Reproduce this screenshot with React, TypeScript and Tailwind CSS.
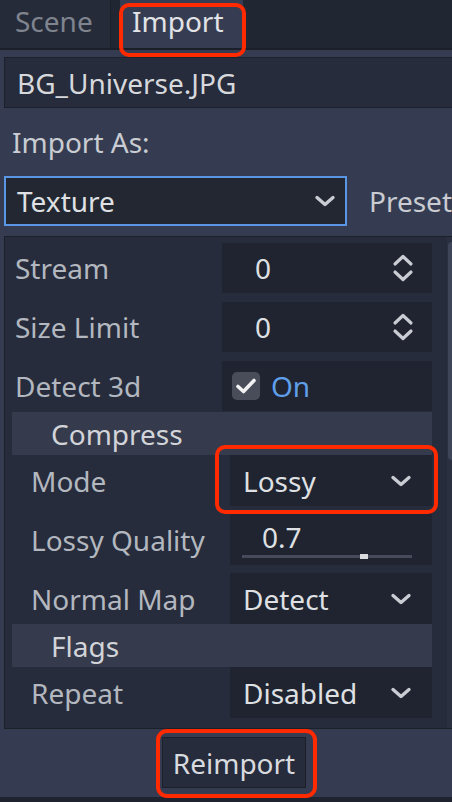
import { ReactNode } from 'react';

const FONT = { fontFamily: '"Noto Sans", "Open Sans", sans-serif' };

function Chevron() {
  return (
    <svg width="22" height="14" viewBox="0 0 22 14" fill="none">
      <path d="M3 3.5 L11 10.5 L19 3.5" stroke="#c9ccd2" strokeWidth="3.4" strokeLinecap="round" strokeLinejoin="round" />
    </svg>
  );
}

function UpDown() {
  return (
    <svg width="24" height="30" viewBox="0 0 24 30" fill="none">
      <path d="M4 11 L12 3.5 L20 11" stroke="#c9ccd2" strokeWidth="3.2" strokeLinecap="round" strokeLinejoin="round" />
      <path d="M4 19 L12 26.5 L20 19" stroke="#c9ccd2" strokeWidth="3.2" strokeLinecap="round" strokeLinejoin="round" />
    </svg>
  );
}

function Row({ label, nested, children }: { label: string; nested?: boolean; children: ReactNode }) {
  return (
    <div className={`flex items-stretch ${nested ? 'h-[51px]' : 'h-[50px]'}`}>
      <div className={`flex items-center text-[#b3b7bf] ${nested ? 'w-[225px] pl-[26px]' : 'w-[217px] pl-[10px]'}`}>
        {label}
      </div>
      <div className="flex-1 bg-[#1f2430] flex items-center relative">{children}</div>
    </div>
  );
}

function Header({ label }: { label: string }) {
  return (
    <div className="h-[43px] ml-[7px] bg-[#353b4c] flex items-center pl-[39px] text-[#d2d4d9]">{label}</div>
  );
}

function Select({ value }: { value: string }) {
  return (
    <div className="flex-1 flex items-center justify-between pl-[13px] pr-[20px] text-[#dfe0e3]">
      <span>{value}</span>
      <Chevron />
    </div>
  );
}

export default function App() {
  return (
    <div className="w-[452px] h-[802px] bg-[#353c51] flex flex-col overflow-hidden relative text-[28px] leading-none" style={FONT}>
      {/* tabs */}
      <div className="h-[50px] shrink-0 bg-[#212633] flex border-b-2 border-[#1b1f29]">
        <div className="w-[111px] bg-[#262b3a] border-r border-[#1c2029] flex items-start pt-[7px] pl-[15px] text-[#7f848e]">
          Scene
        </div>
        <div className="w-[123px] ml-[9px] bg-[#363d52] flex items-start pt-[7px] pl-[12px] text-[#e2e3e6]">
          Import
        </div>
      </div>

      {/* file name */}
      <div className="mt-[7px] ml-[4px] h-[51px] shrink-0 bg-[#262c3b] border border-[#1d212b] border-r-0 flex items-center pl-[12px] text-[#d6d8dc]">
        BG_Universe.JPG
      </div>

      <div className="h-[68px] shrink-0 flex items-center pl-[12px] text-[#c9ccd2]">Import As:</div>

      <div className="h-[50px] shrink-0 flex items-stretch">
        <div className="w-[344px] ml-[4px] bg-[#222732] border-2 border-[#5a96e3] flex items-center justify-between pl-[11px] pr-[9px] text-[#dfe0e3]">
          <span>Texture</span>
          <Chevron />
        </div>
        <div className="flex items-center pl-[22px] text-[#c9ccd2] whitespace-nowrap">Preset</div>
      </div>

      {/* inspector */}
      <div className="mt-[10px] ml-[4px] h-[493px] shrink-0 bg-[#262c3b] border border-r-0 border-[#1c2029] flex">
        <div className="w-[427px] pt-[6px] flex flex-col">
          <div className="flex flex-col gap-[9px]">
            <Row label="Stream">
              <span className="pl-[33px] text-[#dfe0e3]">0</span>
              <span className="absolute right-[17px] top-[10px]"><UpDown /></span>
            </Row>
            <Row label="Size Limit">
              <span className="pl-[33px] text-[#dfe0e3]">0</span>
              <span className="absolute right-[17px] top-[10px]"><UpDown /></span>
            </Row>
            <Row label="Detect 3d">
              <div className="ml-[10px] w-[28px] h-[28px] rounded-[5px] bg-[#484d59] flex items-center justify-center">
                <svg width="22" height="18" viewBox="0 0 22 18" fill="none">
                  <path d="M3 9.5 L8.5 14.5 L19 3.5" stroke="#f2f2f2" strokeWidth="3.6" strokeLinecap="round" strokeLinejoin="round" />
                </svg>
              </div>
              <span className="ml-[11px] text-[#5f9fea]">On</span>
            </Row>
          </div>
          <div className="mt-px">
            <Header label="Compress" />
          </div>
          <div className="flex flex-col gap-[8px]">
            <Row label="Mode" nested>
              <Select value="Lossy" />
            </Row>
            <Row label="Lossy Quality" nested>
              <div className="flex-1 flex flex-col justify-center pl-[32px] text-[#dfe0e3]">
                <span className="-mt-[6px]">0.7</span>
              </div>
              <div className="absolute left-[12px] right-[20px] bottom-[7px] h-[3px] bg-[#454b5a]">
                <div className="absolute left-[118px] -top-px w-[8px] h-[5px] bg-[#d9dadd]" />
              </div>
            </Row>
            <Row label="Normal Map" nested>
              <Select value="Detect" />
            </Row>
          </div>
          <Header label="Flags" />
          <Row label="Repeat" nested>
            <Select value="Disabled" />
          </Row>
        </div>
        {/* scrollbar */}
        <div className="ml-[15px] flex-1 bg-[#2a3040] pt-[5px] pl-px">
          <div className="h-[218px] bg-[#3e4558] rounded-tl-[5px] rounded-bl-[5px]" />
        </div>
      </div>

      {/* bottom */}
      <div className="flex-1 flex justify-center pt-[8px]">
        <div className="w-[144px] h-[51px] ml-[16px] bg-[#262c3b] border border-[#1c2029] flex items-center justify-center text-[#d8dadf]">
          Reimport
        </div>
      </div>
      <div className="h-[5px] shrink-0 bg-[#1f2330]" />

      {/* annotations */}
      <div className="absolute left-[119px] top-[3px] w-[127px] h-[54px] border-[4px] border-[#ff2a00] rounded-[10px]" />
      <div className="absolute left-[215px] top-[445px] w-[223px] h-[69px] border-[4px] border-[#ff2a00] rounded-[10px]" />
      <div className="absolute left-[156px] top-[729px] w-[161px] h-[69px] border-[4px] border-[#ff2a00] rounded-[11px]" />
    </div>
  );
}
